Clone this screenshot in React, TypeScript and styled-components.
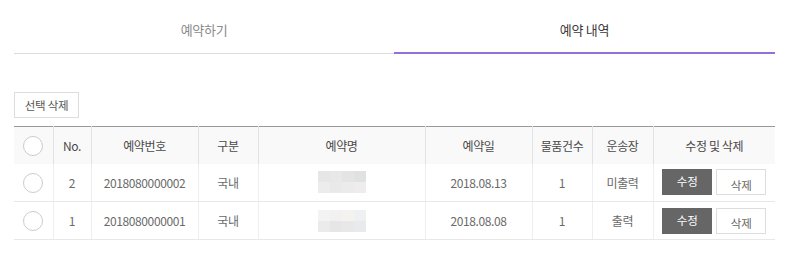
import React from "react";
import styled, { createGlobalStyle } from "styled-components";

const Global = createGlobalStyle`
  html, body { margin: 0; padding: 0; background: #fff; }
  body { font-family: "Noto Sans CJK KR", "Noto Sans", sans-serif; }
  * { box-sizing: border-box; }
`;

const Page = styled.div`
  width: 800px;
  padding: 0 25px 0 14px;
`;

const Tabs = styled.div`
  display: grid;
  grid-template-columns: 380px 381px;
`;

const Tab = styled.div<{ $active?: boolean }>`
  height: 54px;
  padding-top: 20px;
  text-align: center;
  font-size: 13px;
  line-height: 20px;
  letter-spacing: -0.3px;
  color: ${(p) => (p.$active ? "#3a3a3a" : "#8a8a8a")};
  border-bottom: ${(p) => (p.$active ? "2px solid #9370d8" : "1px solid #dcdcdc")};
`;

const Toolbar = styled.div`
  display: flex;
  margin-top: 38px;
`;

const OutlineButton = styled.button`
  width: 65px;
  height: 26px;
  padding: 0;
  border: 1px solid #ddd;
  background: #fff;
  font-family: inherit;
  font-size: 11.5px;
  letter-spacing: -0.3px;
  color: #555;
`;

const Table = styled.table`
  margin-top: 8px;
  width: 761px;
  border-collapse: collapse;
  table-layout: fixed;
  border-top: 1px solid #999;
  font-size: 12px;
  letter-spacing: -0.4px;
`;

const Th = styled.th`
  height: 37px;
  padding: 0;
  background: #f9f9f9;
  font-weight: normal;
  color: #4a4a4a;
  text-align: center;
  border-left: 1px solid #e2e2e2;
  &:first-child { border-left: none; }
`;

const Td = styled.td`
  height: 38px;
  padding: 0;
  color: #6a6a6a;
  text-align: center;
  border-left: 1px solid #eee;
  border-bottom: 1px solid #e8e8e8;
  &:first-child { border-left: none; }
`;

const Circle = styled.span`
  display: inline-block;
  width: 20px;
  height: 20px;
  border-radius: 50%;
  border: 1px solid #ccc;
  background: #fff;
  vertical-align: middle;
`;

const Mosaic = styled.div`
  display: inline-grid;
  grid-template-columns: repeat(4, 12px);
  grid-template-rows: repeat(2, 11px);
  vertical-align: middle;
`;

const Cell = styled.div<{ $c: string }>`
  background: ${(p) => p.$c};
`;

const Actions = styled.div`
  display: flex;
  justify-content: center;
  gap: 4px;
`;

const EditButton = styled.button`
  width: 50px;
  height: 26px;
  border: none;
  background: #666;
  color: #fff;
  font-family: inherit;
  font-size: 11.5px;
  padding: 0 0 2px;
`;

const DeleteButton = styled.button`
  width: 50px;
  height: 26px;
  border: 1px solid #ddd;
  background: #fff;
  color: #666;
  font-family: inherit;
  font-size: 11.5px;
  padding: 5px 0 0;
`;

const cols = [39, 38, 107, 60, 167, 107, 60, 61, 122];
const headers = ["", "No.", "예약번호", "구분", "예약명", "예약일", "물품건수", "운송장", "수정 및 삭제"];

const rows = [
  {
    no: "2",
    id: "2018080000002",
    kind: "국내",
    date: "2018.08.13",
    count: "1",
    waybill: "미출력",
    mosaic: ["#e6e6e6", "#e8e8e8", "#e4e4e4", "#e0e2e2", "#ececec", "#e9e9e9", "#ebebeb", "#ededed"],
  },
  {
    no: "1",
    id: "2018080000001",
    kind: "국내",
    date: "2018.08.08",
    count: "1",
    waybill: "출력",
    mosaic: ["#f3f3f3", "#f1f1f1", "#f4f3f0", "#eef0f2", "#ebebeb", "#e6e6e6", "#e8e8e8", "#e9eaeb"],
  },
];

export default function App() {
  return (
    <Page>
      <Global />
      <Tabs>
        <Tab>예약하기</Tab>
        <Tab $active>예약 내역</Tab>
      </Tabs>
      <Toolbar>
        <OutlineButton>선택 삭제</OutlineButton>
      </Toolbar>
      <Table>
        <colgroup>
          {cols.map((w, i) => (
            <col key={i} style={{ width: w }} />
          ))}
        </colgroup>
        <thead>
          <tr>
            {headers.map((h, i) => (
              <Th key={i}>{i === 0 ? <Circle /> : h}</Th>
            ))}
          </tr>
        </thead>
        <tbody>
          {rows.map((r) => (
            <tr key={r.no}>
              <Td>
                <Circle />
              </Td>
              <Td>{r.no}</Td>
              <Td>{r.id}</Td>
              <Td>{r.kind}</Td>
              <Td>
                <Mosaic>
                  {r.mosaic.map((c, i) => (
                    <Cell key={i} $c={c} />
                  ))}
                </Mosaic>
              </Td>
              <Td>{r.date}</Td>
              <Td>{r.count}</Td>
              <Td>{r.waybill}</Td>
              <Td>
                <Actions>
                  <EditButton>수정</EditButton>
                  <DeleteButton>삭제</DeleteButton>
                </Actions>
              </Td>
            </tr>
          ))}
        </tbody>
      </Table>
    </Page>
  );
}
